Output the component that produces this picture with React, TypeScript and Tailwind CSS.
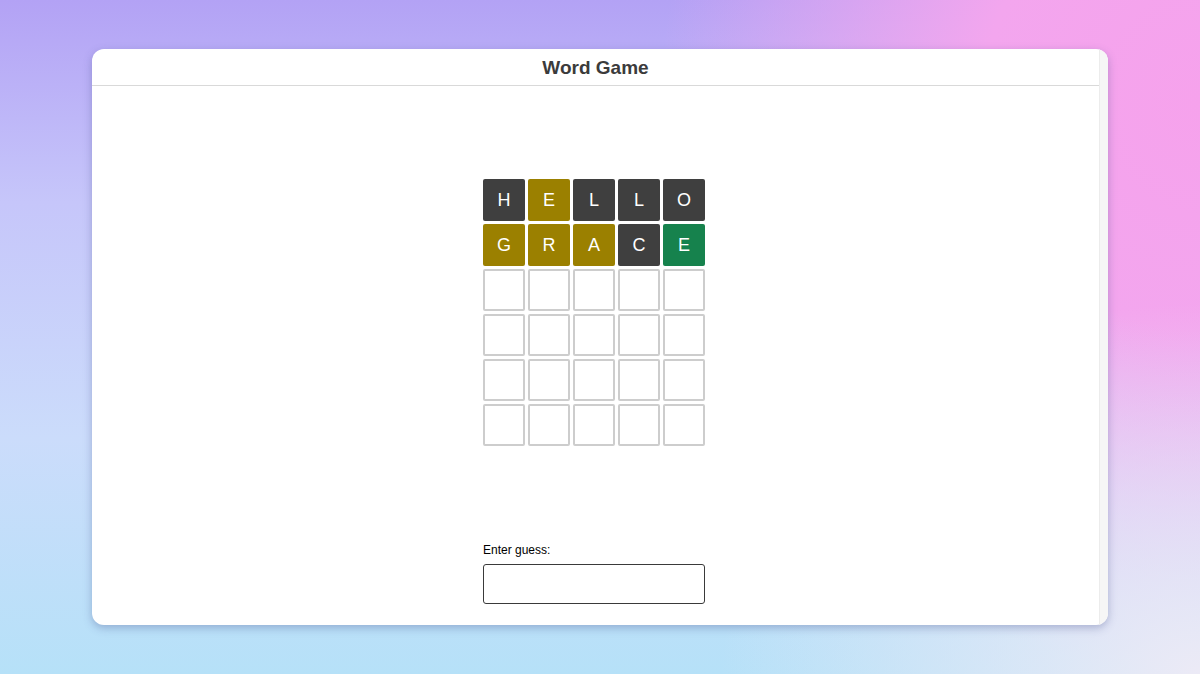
import React from 'react';

type Tile = { ch: string; state: 'absent' | 'present' | 'correct' | 'empty' };

const guesses: string[][] = [
  ['H', 'E', 'L', 'L', 'O'],
  ['G', 'R', 'A', 'C', 'E'],
];
const states: Tile['state'][][] = [
  ['absent', 'present', 'absent', 'absent', 'absent'],
  ['present', 'present', 'present', 'absent', 'correct'],
];

const tileClass: Record<Tile['state'], string> = {
  absent: 'bg-[#3f3f3f] text-white',
  present: 'bg-[#9b8000] text-white',
  correct: 'bg-[#16824d] text-white',
  empty: 'bg-white border-2 border-[#cdcdcd]',
};

function buildBoard(): Tile[][] {
  const rows: Tile[][] = [];
  for (let r = 0; r < 6; r++) {
    const row: Tile[] = [];
    for (let c = 0; c < 5; c++) {
      if (r < guesses.length) row.push({ ch: guesses[r][c], state: states[r][c] });
      else row.push({ ch: '', state: 'empty' });
    }
    rows.push(row);
  }
  return rows;
}

export default function App() {
  const board = buildBoard();

  return (
    <div className="w-[1200px] h-[674px] overflow-hidden bg-[radial-gradient(ellipse_40%_55%_at_100%_100%,#eceaf6_0%,rgba(236,234,246,0)_100%),radial-gradient(ellipse_45%_85%_at_100%_15%,#f6a2ec_0%,#f3a6ee_40%,rgba(243,166,238,0)_100%),linear-gradient(180deg,#b3a2f5_0%,#c6c6fa_30%,#cbdcfb_65%,#b6e1f8_100%)] pt-[49px] pl-[92px] font-['Liberation_Sans',Arial,sans-serif]">
      {/* App window */}
      <div className="w-[1016px] h-[576px] bg-white rounded-[12px] shadow-[0_3px_8px_rgba(70,80,140,0.35)] overflow-hidden flex">
        <div className="flex-1 flex flex-col">
          {/* Title bar */}
          <header className="h-[37px] border-b border-[#d9d9d9] flex items-center justify-center">
            <h1 className="text-[19px] font-bold text-[#3b3b3b] leading-none">Word Game</h1>
          </header>

          {/* Game area */}
          <main className="flex-1 flex flex-col items-center pr-[3px]">
            <div className="mt-[93px] flex flex-col gap-[3px]">
              {board.map((row, r) => (
                <div key={r} className="flex gap-[3px]">
                  {row.map((t, c) => (
                    <div
                      key={c}
                      className={`w-[42px] h-[42px] rounded-[2px] flex items-center justify-center text-[18px] ${tileClass[t.state]}`}
                    >
                      {t.ch}
                    </div>
                  ))}
                </div>
              ))}
            </div>

            <div className="mt-[97px] w-[222px]">
              <label className="block text-[12px] text-black leading-[14px] mb-[7px]">Enter guess:</label>
              <input
                type="text"
                className="block w-[222px] h-[40px] border border-[#3a3a3a] rounded-[3px] outline-none px-2"
              />
            </div>
          </main>
        </div>
        {/* scrollbar gutter */}
        <div className="w-[9px] bg-[#f6f6f6] border-l border-[#ececec]" />
      </div>
    </div>
  );
}
